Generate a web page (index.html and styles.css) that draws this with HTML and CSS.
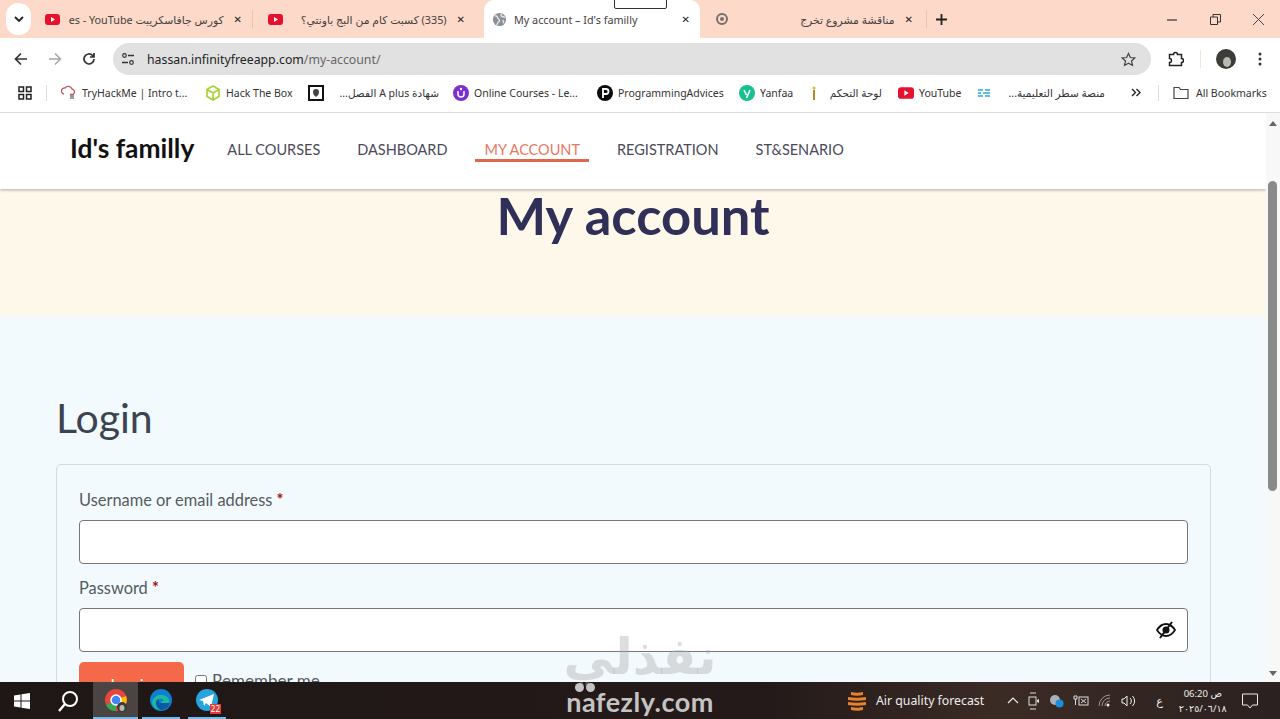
FILE: index.html
```html
<!DOCTYPE html>
<html lang="en">

<head>
    <meta charset="UTF-8">
    <title>My account – Id's familly</title>
    <link rel="stylesheet" href="styles.css">
</head>

<body>
    <!-- Tab strip -->
    <div class="tabstrip">
        <div class="tab-menu">
            <svg width="10" height="6" viewBox="0 0 10 6"><path d="M1 1l4 4 4-4" fill="none" stroke="#222" stroke-width="1.8"/></svg>
        </div>
        <div class="tab tab-first">
            <svg class="yt" width="15" height="11" viewBox="0 0 15 11"><rect width="15" height="11" rx="3" fill="#e8112d"/><path d="M6 3l4 2.5L6 8z" fill="#fff"/></svg>
            <span class="tab-title tab-rtl">كورس جافاسكريبت es - YouTube</span>
            <span class="tab-x">✕</span>
        </div>
        <div class="tab-sep"></div>
        <div class="tab tab-second">
            <svg class="yt" width="15" height="11" viewBox="0 0 15 11"><rect width="15" height="11" rx="3" fill="#e8112d"/><path d="M6 3l4 2.5L6 8z" fill="#fff"/></svg>
            <span class="tab-title tab-rtl">(335) كسبت كام من البج باونتي؟</span>
            <span class="tab-x">✕</span>
        </div>
        <div class="tab tab-active">
            <svg width="15" height="15" viewBox="0 0 16 16"><circle cx="8" cy="8" r="7" fill="#8b8f94"/><path d="M3 4c2 0 3 1 3 2s2 1 2 3-2 1-2 3l-1 2M10 2c-1 2 0 3 2 3l2 1M11 9c1 0 2 1 1 3" fill="none" stroke="#e6e8ea" stroke-width="1.5"/></svg>
            <span class="tab-title">My account – Id's familly</span>
            <span class="tab-x">✕</span>
        </div>
        <div class="tab tab-last">
            <svg width="12" height="12" viewBox="0 0 12 12"><circle cx="6" cy="6" r="5" fill="none" stroke="#77706c" stroke-width="2"/><circle cx="6" cy="6" r="2" fill="#77706c"/></svg>
            <span class="tab-title tab-rtl">مناقشة مشروع تخرج</span>
            <span class="tab-x">✕</span>
        </div>
        <div class="tab-sep"></div>
        <svg class="tab-new" width="11" height="11" viewBox="0 0 11 11"><path d="M5.5 0v11M0 5.5h11" stroke="#222" stroke-width="1.8"/></svg>
        <div class="window-controls">
            <svg width="11" height="11" viewBox="0 0 11 11"><path d="M0 6h10" stroke="#333" stroke-width="1.2"/></svg>
            <svg width="11" height="11" viewBox="0 0 11 11"><path d="M.5 3h7v7.500h-7zM3 3V.5h7.500V8H8" fill="none" stroke="#333"/></svg>
            <svg width="11" height="11" viewBox="0 0 11 11"><path d="M0 0l11 11M11 0L0 11" stroke="#444" stroke-width="1"/></svg>
        </div>
    </div>
    <div class="tab-preview"></div>

    <!-- Toolbar -->
    <div class="toolbar">
        <svg width="14" height="14" viewBox="0 0 14 14"><path d="M13 7H2M7 1.500L1.500 7 7 12.500" fill="none" stroke="#333" stroke-width="1.700"/></svg>
        <svg width="14" height="14" viewBox="0 0 14 14"><path d="M1 7h11M7 1.500L12.500 7 7 12.500" fill="none" stroke="#a5a5a5" stroke-width="1.500"/></svg>
        <svg width="14" height="14" viewBox="0 0 14 14"><path d="M12 7a5 5 0 1 1-1.500-3.600L12 5M12 1v4H8" fill="none" stroke="#333" stroke-width="1.700"/></svg>
        <div class="omnibox">
            <svg width="14" height="14" viewBox="0 0 14 14"><circle cx="3.500" cy="3.500" r="1.800" fill="none" stroke="#333" stroke-width="1.200"/><path d="M7 3.500h6M1 10.500h6" stroke="#333" stroke-width="1.400"/><circle cx="10.500" cy="10.500" r="1.800" fill="none" stroke="#333" stroke-width="1.200"/></svg>
            <span class="url">hassan.infinityfreeapp.com<span class="url-path">/my-account/</span></span>
            <svg class="star" width="15" height="15" viewBox="0 0 16 16"><path d="M8 1.500l2 4.400 4.700.5-3.500 3.200 1 4.700L8 11.900l-4.200 2.400 1-4.700L1.300 6.400 6 5.900z" fill="none" stroke="#444" stroke-width="1.300"/></svg>
        </div>
        <svg class="tool-puzzle" width="16" height="16" viewBox="0 0 16 16"><path d="M1.500 3.500h4a2 2 0 0 1 4 0h4v4a2 2 0 0 1 0 4v3h-12v-3a2 2 0 0 0 0-4z" fill="none" stroke="#222" stroke-width="1.500"/></svg>
        <div class="tool-sep"></div>
        <svg class="avatar" width="20" height="20" viewBox="0 0 20 20"><circle cx="10" cy="10" r="10" fill="#3c3d38"/><ellipse cx="11" cy="13" rx="4" ry="5" fill="#b9b8b2"/></svg>
        <svg class="dots" width="4" height="14" viewBox="0 0 4 14"><circle cx="2" cy="2" r="1.500" fill="#333"/><circle cx="2" cy="7" r="1.500" fill="#333"/><circle cx="2" cy="12" r="1.500" fill="#333"/></svg>
    </div>

    <!-- Bookmarks -->
    <div class="bookmarks">
        <svg class="bm-apps" width="14" height="14" viewBox="0 0 14 14"><path d="M1 1h4.500v4.500H1zM8.500 1H13v4.500H8.500zM1 8.500h4.500V13H1zM8.500 8.500H13V13H8.500z" fill="none" stroke="#222" stroke-width="1.500"/></svg>
        <div class="bm-sep"></div>
        <div class="bm bm-thm">
            <svg width="16" height="15" viewBox="0 0 16 15"><path d="M3 9a3 3 0 0 1 1-6 4 4 0 0 1 7 1 3 3 0 0 1 1 5.500H9" fill="none" stroke="#c9515f" stroke-width="1.300"/><rect x="9" y="10" width="4" height="4" fill="#999"/></svg>
            <span class="bm-text">TryHackMe | Intro t...</span>
        </div>
        <div class="bm bm-htb">
            <svg width="16" height="16" viewBox="0 0 16 16"><path d="M8 1l6 3.500v7L8 15l-6-3.500v-7zM2 4.500L8 8l6-3.500M8 8v7" fill="none" stroke="#a5d22f" stroke-width="1.600"/></svg>
            <span class="bm-text">Hack The Box</span>
        </div>
        <div class="bm bm-aplus">
            <svg width="16" height="16" viewBox="0 0 16 16"><rect x="1" y="1" width="14" height="14" fill="#fff" stroke="#111" stroke-width="2"/><path d="M8 4a3 3 0 0 1 3 3c0 3-2 4-3 5-1-1-3-2-3-5a3 3 0 0 1 3-3z" fill="#444"/></svg>
            <span class="bm-text" dir="rtl">شهادة A plus الفصل...</span>
        </div>
        <div class="bm bm-oc">
            <svg width="16" height="16" viewBox="0 0 16 16"><circle cx="8" cy="8" r="8" fill="#7b2fd0"/><path d="M5 6v3a3 3 0 0 0 6 0V6" fill="none" stroke="#fff" stroke-width="1.500"/><circle cx="8" cy="4" r="1.200" fill="#fff"/></svg>
            <span class="bm-text">Online Courses - Le...</span>
        </div>
        <div class="bm bm-pa">
            <svg width="16" height="16" viewBox="0 0 16 16"><circle cx="8" cy="8" r="8" fill="#0b0b0b"/><path d="M6 13V4h3a2.500 2.500 0 0 1 0 5H6" fill="none" stroke="#fff" stroke-width="1.800"/></svg>
            <span class="bm-text">ProgrammingAdvices</span>
        </div>
        <div class="bm bm-yan">
            <svg width="16" height="16" viewBox="0 0 16 16"><circle cx="8" cy="8" r="8" fill="#17c08f"/><path d="M5 5l2.500 5M11 5l-3.500 8" fill="none" stroke="#fff" stroke-width="1.600"/></svg>
            <span class="bm-text">Yanfaa</span>
        </div>
        <div class="bm bm-lawha">
            <svg width="10" height="16" viewBox="0 0 10 16"><path d="M5 5v10" stroke="#b58a1e" stroke-width="2"/><circle cx="5" cy="3" r="1.500" fill="#d9b93c"/></svg>
            <span class="bm-text" dir="rtl">لوحة التحكم</span>
        </div>
        <div class="bm bm-yt">
            <svg width="16" height="12" viewBox="0 0 15 11"><rect width="15" height="11" rx="3" fill="#e8112d"/><path d="M6 3l4 2.500L6 8z" fill="#fff"/></svg>
            <span class="bm-text">YouTube</span>
        </div>
        <div class="bm bm-satr">
            <svg width="14" height="10" viewBox="0 0 14 10"><path d="M1 2h5M8 2h5M1 5h3M6 5h7M1 8h5M8 8h5" stroke="#28a9d8" stroke-width="1.600"/></svg>
            <span class="bm-text" dir="rtl">منصة سطر التعليمية...</span>
        </div>
        <svg class="bm-more" width="10" height="9" viewBox="0 0 10 9"><path d="M1 1l3.500 3.500L1 8M5.500 1L9 4.500 5.500 8" fill="none" stroke="#222" stroke-width="1.400"/></svg>
        <div class="bm-sep bm-sep-right"></div>
        <div class="bm bm-all">
            <svg width="16" height="13" viewBox="0 0 16 13"><path d="M1 1.500h5l1.500 2H15v9H1z" fill="none" stroke="#444" stroke-width="1.200"/></svg>
            <span class="bm-text">All Bookmarks</span>
        </div>
    </div>

    <!-- Page -->
    <div class="viewport">
        <div class="page">
            <header class="site-header">
                <div class="logo">Id's familly</div>
                <nav class="site-nav">
                    <a href="#">ALL COURSES</a>
                    <a href="#">DASHBOARD</a>
                    <a href="#" class="current">MY ACCOUNT</a>
                    <a href="#">REGISTRATION</a>
                    <a href="#">ST&amp;SENARIO</a>
                </nav>
            </header>
            <div class="hero">
                <h1>My account</h1>
            </div>
            <main class="account">
                <h2>Login</h2>
                <form class="login-card">
                    <label for="username">Username or email address <b>*</b></label>
                    <input type="text" id="username">
                    <label for="password">Password <b>*</b></label>
                    <div class="password-wrap">
                        <input type="password" id="password">
                        <svg class="eye" width="20" height="18" viewBox="0 0 20 18"><path d="M1 9c2.500-4 5.500-6 9-6s6.500 2 9 6c-2.500 4-5.500 6-9 6s-6.500-2-9-6z" fill="none" stroke="#111" stroke-width="1.800"/><circle cx="10" cy="9" r="3.500" fill="#111"/><path d="M16 1L4 17" stroke="#111" stroke-width="2"/></svg>
                    </div>
                    <div class="login-row">
                        <button type="button">Log in</button>
                        <label class="remember"><input type="checkbox"> Remember me</label>
                    </div>
                </form>
            </main>
        </div>
        <div class="scrollbar">
            <span class="arrow-up"></span>
            <div class="thumb"></div>
            <span class="arrow-down"></span>
        </div>
    </div>

    <!-- Windows taskbar -->
    <div class="taskbar">
        <svg class="tb-win" width="16" height="16" viewBox="0 0 16 16"><path d="M0 2.500l6.500-1v6H0zM7.500 1.300L16 0v7.500H7.500zM0 8.500h6.500v6l-6.500-1zM7.500 8.500H16V16l-8.500-1.300z" fill="#fff"/></svg>
        <svg class="tb-search" width="22" height="22" viewBox="0 0 22 22"><circle cx="13" cy="9" r="7" fill="none" stroke="#fff" stroke-width="2"/><path d="M8 14l-6 7" stroke="#fff" stroke-width="2.400"/></svg>
        <div class="tb-app tb-chrome">
            <svg width="24" height="24" viewBox="0 0 24 24"><circle cx="12" cy="12" r="11" fill="#e8453c"/><path d="M12 12L2 17a11 11 0 0 0 10 6z" fill="#34a853"/><path d="M12 12l10-4a11 11 0 0 1-6 14z" fill="#fbbc05"/><circle cx="12" cy="12" r="5" fill="#4285f4" stroke="#fff" stroke-width="1.500"/><circle cx="18" cy="19" r="5" fill="#3c3d38"/><ellipse cx="18" cy="20" rx="2.500" ry="3" fill="#b9b8b2"/></svg>
        </div>
        <div class="tb-app tb-edge">
            <svg width="24" height="24" viewBox="0 0 24 24"><circle cx="12" cy="12" r="11" fill="#0f7fd0"/><path d="M3 15C4 8 11 5 17 8c3 2 4 5 3 7h-8c0-2 2-2 3-2-1-3-6-3-8 0-1 3 1 7 5 9-5 0-8-3-9-7z" fill="#1bb9a0"/><path d="M12 15h9c-1 4-5 7-9 7-3-1-5-4-5-7 0-2 2-4 3-4-1 1 0 4 2 4z" fill="#0c59a4"/></svg>
        </div>
        <div class="tb-app tb-telegram">
            <svg width="24" height="24" viewBox="0 0 24 24"><circle cx="12" cy="12" r="11" fill="#27a4e0"/><path d="M4 12l15-6-3 13-5-4-2 3-1-5z" fill="#fff"/></svg>
            <span class="tb-badge">22</span>
        </div>
        <div class="tb-weather">
            <svg width="20" height="22" viewBox="0 0 20 22"><path d="M4 2c4 1 8 1 12 0v3c-4 1-8 1-12 0zM1 7c6 1 12 1 18 0v3c-6 1-12 1-18 0zM1 12c6 1 12 1 18 0v3c-6 1-12 1-18 0zM4 17c4 1 8 1 12 0v3c-4 1-8 1-12 0z" fill="#e8812e"/></svg>
            <span>Air quality forecast</span>
        </div>
        <div class="tray">
            <svg width="12" height="7" viewBox="0 0 12 7"><path d="M1 6l5-5 5 5" fill="none" stroke="#eee" stroke-width="1.200"/></svg>
            <svg width="12" height="18" viewBox="0 0 12 18"><path d="M2 1h6M2 17h6" stroke="#ddd"/><rect x="1" y="5" width="7" height="8" fill="none" stroke="#ddd"/><path d="M9 8l2-1v4l-2-1z" fill="#ddd"/></svg>
            <svg width="15" height="15" viewBox="0 0 15 15"><circle cx="6" cy="7" r="5" fill="#aab2b8"/><circle cx="10.500" cy="10.500" r="4" fill="#1a8fd8"/></svg>
            <svg width="16" height="12" viewBox="0 0 16 12"><rect x="6" y="2" width="9" height="8" fill="none" stroke="#ddd"/><path d="M8 4l5 4M13 4L8 8M1 1h3v3H1zM2.500 4v6" fill="none" stroke="#ddd"/></svg>
            <svg width="14" height="13" viewBox="0 0 14 13"><path d="M1 12a11 11 0 0 1 11-11M4 12a8 8 0 0 1 8-8M7 12a5 5 0 0 1 5-5" fill="none" stroke="#999"/><circle cx="10" cy="11" r="1.500" fill="#eee"/></svg>
            <svg width="16" height="14" viewBox="0 0 16 14"><path d="M1 5h2l3-3v10L3 9H1z" fill="none" stroke="#eee"/><path d="M9 4a4 4 0 0 1 0 6M11.500 2a7 7 0 0 1 0 10" fill="none" stroke="#eee"/></svg>
        </div>
        <span class="tb-lang">ع</span>
        <div class="tb-clock">
            <span dir="rtl">ص 06:20</span>
            <span>٢٠٢٥/٠٦/١٨</span>
        </div>
        <svg class="tb-notify" width="16" height="16" viewBox="0 0 16 16"><path d="M.5 1h15v11h-5L8 15l-2.500-3h-5z" fill="none" stroke="#eee"/></svg>
    </div>

    <!-- Watermark -->
    <div class="watermark">
        <div class="wm-ar" dir="rtl">نفذلي</div>
        <div class="wm-dots"><i></i><i></i></div>
        <div class="wm-en">nafezly.com</div>
    </div>
</body>

</html>
```

FILE: styles.css
```css
* {
    box-sizing: border-box;
}

html,
body {
    height: 100%;
}

body {
    position: relative;
    display: flex;
    flex-direction: column;
    height: 719px;
    margin: 0;
    overflow: hidden;
    font-family: "Noto Sans", "DejaVu Sans", sans-serif;
    color: #333;
    background-color: #fff;
}

/* Tab strip */
.tabstrip {
    display: flex;
    align-items: center;
    height: 38px;
    padding-left: 6px;
    background-color: #fcd9c8;
    flex-shrink: 0;
}

.tab-menu {
    display: flex;
    align-items: center;
    justify-content: center;
    width: 25px;
    height: 32px;
    margin-right: 7px;
    border-radius: 12px;
    background-color: #fff;
}

.tab {
    display: flex;
    align-items: center;
    height: 38px;
    padding: 0 10px 0 7px;
    font-size: 10.800px;
    color: #45413f;
}

.tab-first {
    width: 214px;
}

.tab-second {
    width: 214px;
    margin-left: 8px;
}

.tab-active {
    width: 216px;
    margin-left: 9px;
    padding: 0 10px 0 8px;
    border-radius: 10px 10px 0 0;
    background-color: #fff;
}

.tab-last {
    width: 218px;
    margin-left: 8px;
    padding: 0 13px 0 8px;
}

.tab-title {
    flex: 1;
    min-width: 0;
    margin-left: 7px;
    white-space: nowrap;
}

.tab-rtl {
    direction: rtl;
    text-align: right;
    padding-right: 10px;
}

.tab-x {
    font-size: 10px;
    font-weight: bold;
    color: #222;
}

.tab-sep {
    width: 1px;
    height: 18px;
    background-color: #ecc3b1;
}

.tab-new {
    margin-left: 9px;
}

.window-controls {
    display: flex;
    gap: 32px;
    align-items: center;
    margin-left: auto;
    padding-right: 16px;
}

/* Small floating box at the top of the window */
.tab-preview {
    position: absolute;
    top: -2px;
    left: 614px;
    width: 53px;
    height: 11px;
    border: 1px solid #333;
    border-radius: 0 0 2px 2px;
    background-color: #fff;
}

/* Toolbar */
.toolbar {
    display: flex;
    align-items: center;
    height: 42px;
    padding-left: 14px;
    gap: 20px;
    background-color: #fff;
    flex-shrink: 0;
}

.omnibox {
    display: flex;
    align-items: center;
    width: 1038px;
    height: 32px;
    margin-left: -3px;
    padding: 0 15px 0 8px;
    border-radius: 16px;
    background-color: #e1e1e1;
}

.url {
    margin-left: 12px;
    font-size: 12.300px;
    color: #222;
}

.url-path {
    color: #666;
}

.star {
    margin-left: auto;
}

.tool-puzzle {
    margin-left: -3px;
}

.tool-sep {
    width: 1px;
    height: 18px;
    margin-left: -4px;
    background-color: #f3e4dc;
}

.avatar {
    margin-left: -5px;
}

.dots {
    margin-left: 2px;
}

/* Bookmarks */
.bookmarks {
    display: flex;
    align-items: center;
    height: 33px;
    padding: 0 0 7px 18px;
    border-bottom: 1px solid #dcdcdc;
    background-color: #fff;
    flex-shrink: 0;
}

.bm-sep {
    width: 1px;
    height: 16px;
    margin: 0 14px;
    background-color: #ddd;
}

.bm {
    display: flex;
    align-items: center;
    gap: 5px;
    font-size: 10.500px;
    color: #333;
    white-space: nowrap;
}

.bm-text {
    display: block;
}

.bm-thm {
    width: 144px;
}

.bm-thm .bm-text {
    width: 105px;
}

.bm-htb {
    width: 103px;
}

.bm-htb .bm-text {
    width: 68px;
}

.bm-aplus {
    width: 145px;
}

.bm-aplus .bm-text {
    width: 106px;
    margin-left: 4px;
}

.bm-oc {
    width: 144px;
}

.bm-oc .bm-text {
    width: 107px;
}

.bm-pa {
    width: 142px;
}

.bm-pa .bm-text {
    width: 107px;
}

.bm-yan {
    width: 70px;
}

.bm-lawha {
    width: 89px;
}

.bm-lawha .bm-text {
    width: 54px;
    margin-left: 4px;
}

.bm-yt {
    width: 79px;
}

.bm-satr {
    width: 142px;
}

.bm-satr .bm-text {
    width: 106px;
    margin-left: 3px;
}

.bm-more {
    margin-left: 12px;
}

.bm-sep-right {
    margin: 0 14px 0 17px;
}

.bm-all {
    gap: 7px;
}

/* Page */
.viewport {
    display: flex;
    flex: 1;
    min-height: 0;
}

.page {
    flex: 1;
    overflow: hidden;
    background-color: #f3fafe;
}

.site-header {
    position: relative;
    display: flex;
    align-items: center;
    height: 76px;
    padding-left: 70px;
    background-color: #fff;
    box-shadow: 0 1px 3px rgba(0, 0, 0, 0.3);
}

.logo {
    margin-right: 24px;
    padding-bottom: 7px;
    font-family: "Lato", sans-serif;
    font-size: 26.400px;
    font-weight: bold;
    color: #111;
}

.site-nav {
    display: flex;
    gap: 19px;
    padding-top: 1px;
}

.site-nav a {
    padding: 0 9px 1px;
    border-bottom: 3px solid transparent;
    font-family: "Lato", sans-serif;
    font-size: 14.500px;
    color: #4a4a5a;
    text-decoration: none;
}

.site-nav a.current {
    border-bottom-color: #e0674e;
    color: #e9775f;
}

.hero {
    height: 127px;
    background-color: #fef8ea;
    text-align: center;
}

.hero h1 {
    margin: 0;
    font-family: "Lato", sans-serif;
    font-size: 52.500px;
    font-weight: bold;
    line-height: 51px;
    color: #2f2f58;
}

.account {
    padding: 77px 55px 0 56px;
}

.account h2 {
    margin: 0 0 21px;
    font-family: "Lato", sans-serif;
    font-size: 41px;
    font-weight: normal;
    line-height: 50px;
    color: #3b4450;
}

.login-card {
    padding: 24px 22px 0;
    border: 1px solid #d4dadd;
    border-radius: 5px;
}

.login-card label {
    display: block;
    font-family: "Lato", sans-serif;
    font-size: 16.400px;
    line-height: 22px;
    color: #555a60;
}

.login-card label b {
    color: #a01515;
}

.login-card input[type="text"],
.login-card input[type="password"] {
    display: block;
    width: 100%;
    height: 44px;
    margin: 9px 0 13px;
    border: 1.500px solid #777;
    border-radius: 4px;
    background-color: #fff;
}

.password-wrap {
    position: relative;
}

.eye {
    position: absolute;
    top: 13px;
    right: 12px;
}

.login-row {
    display: flex;
    align-items: center;
    margin-top: -3px;
}

.login-row button {
    width: 105px;
    height: 40px;
    padding-top: 4px;
    border: none;
    border-radius: 5px;
    background-color: #f4694a;
    color: #fff;
    font-family: "Lato", sans-serif;
    font-size: 16px;
}

.login-card .remember {
    display: flex;
    align-items: center;
    gap: 5px;
    margin: -2px 0 0 11px;
    font-size: 17px;
}

.remember input {
    width: 12px;
    height: 12px;
    margin: 0;
}

/* Scrollbar */
.scrollbar {
    position: relative;
    width: 14px;
    background-color: #f8f8f8;
    flex-shrink: 0;
}

.arrow-up {
    position: absolute;
    top: 8px;
    left: 3px;
    border: 4px solid transparent;
    border-top: 0;
    border-bottom: 5px solid #666;
}

.arrow-down {
    position: absolute;
    bottom: 6px;
    left: 3px;
    border: 4px solid transparent;
    border-bottom: 0;
    border-top: 5px solid #666;
}

.thumb {
    position: absolute;
    top: 68px;
    left: 2px;
    width: 9px;
    height: 310px;
    border-radius: 5px;
    background-color: #8a8a8a;
}

/* Taskbar */
.taskbar {
    display: flex;
    align-items: center;
    height: 37px;
    background: linear-gradient(90deg, #1f1716 0%, #231a19 60%, #3b2b25 78%, #2b2120 100%);
    color: #eee;
    flex-shrink: 0;
}

.tb-win {
    margin-left: 14px;
}

.tb-search {
    margin-left: 27px;
}

.tb-app {
    position: relative;
    display: flex;
    align-items: center;
    justify-content: center;
    height: 37px;
    border-bottom: 2px solid #76b9ed;
}

.tb-chrome {
    width: 45px;
    margin-left: 14px;
    background-color: #4a4543;
}

.tb-edge {
    width: 38px;
    margin-left: 4px;
}

.tb-telegram {
    width: 38px;
    margin-left: 8px;
}

.tb-badge {
    position: absolute;
    right: 5px;
    bottom: 3px;
    padding: 0 1px;
    background-color: #e23a36;
    color: #fff;
    font-size: 8px;
    line-height: 10px;
}

.tb-weather {
    display: flex;
    align-items: center;
    gap: 9px;
    margin-left: 621px;
    font-size: 12.300px;
}

.tray {
    display: flex;
    align-items: center;
    gap: 9px;
    margin-left: 23px;
}

.tb-lang {
    margin-left: 19px;
    font-size: 11px;
}

.tb-clock {
    display: flex;
    flex-direction: column;
    align-items: center;
    width: 48px;
    margin-left: 16px;
    font-size: 9.500px;
    line-height: 15px;
}

.tb-notify {
    margin-left: 15px;
}

/* Watermark over the page */
.watermark {
    position: absolute;
    top: 631px;
    left: 560px;
    width: 160px;
    text-align: center;
    pointer-events: none;
}

.wm-ar {
    height: 52px;
    font-family: "DejaVu Sans", sans-serif;
    font-size: 50px;
    font-weight: bold;
    line-height: 52px;
    color: rgba(170, 170, 170, 0.4);
    white-space: nowrap;
}

.wm-dots {
    display: flex;
    gap: 2px;
    margin-left: 15px;
}

.wm-dots i {
    width: 9px;
    height: 9px;
    border-radius: 50%;
    background-color: #c4c4c4;
}

.wm-en {
    margin-top: -3px;
    font-family: "Lato", sans-serif;
    font-size: 27px;
    font-weight: bold;
    line-height: 26px;
    color: #c4c4c4;
    letter-spacing: 0.500px;
}
```
